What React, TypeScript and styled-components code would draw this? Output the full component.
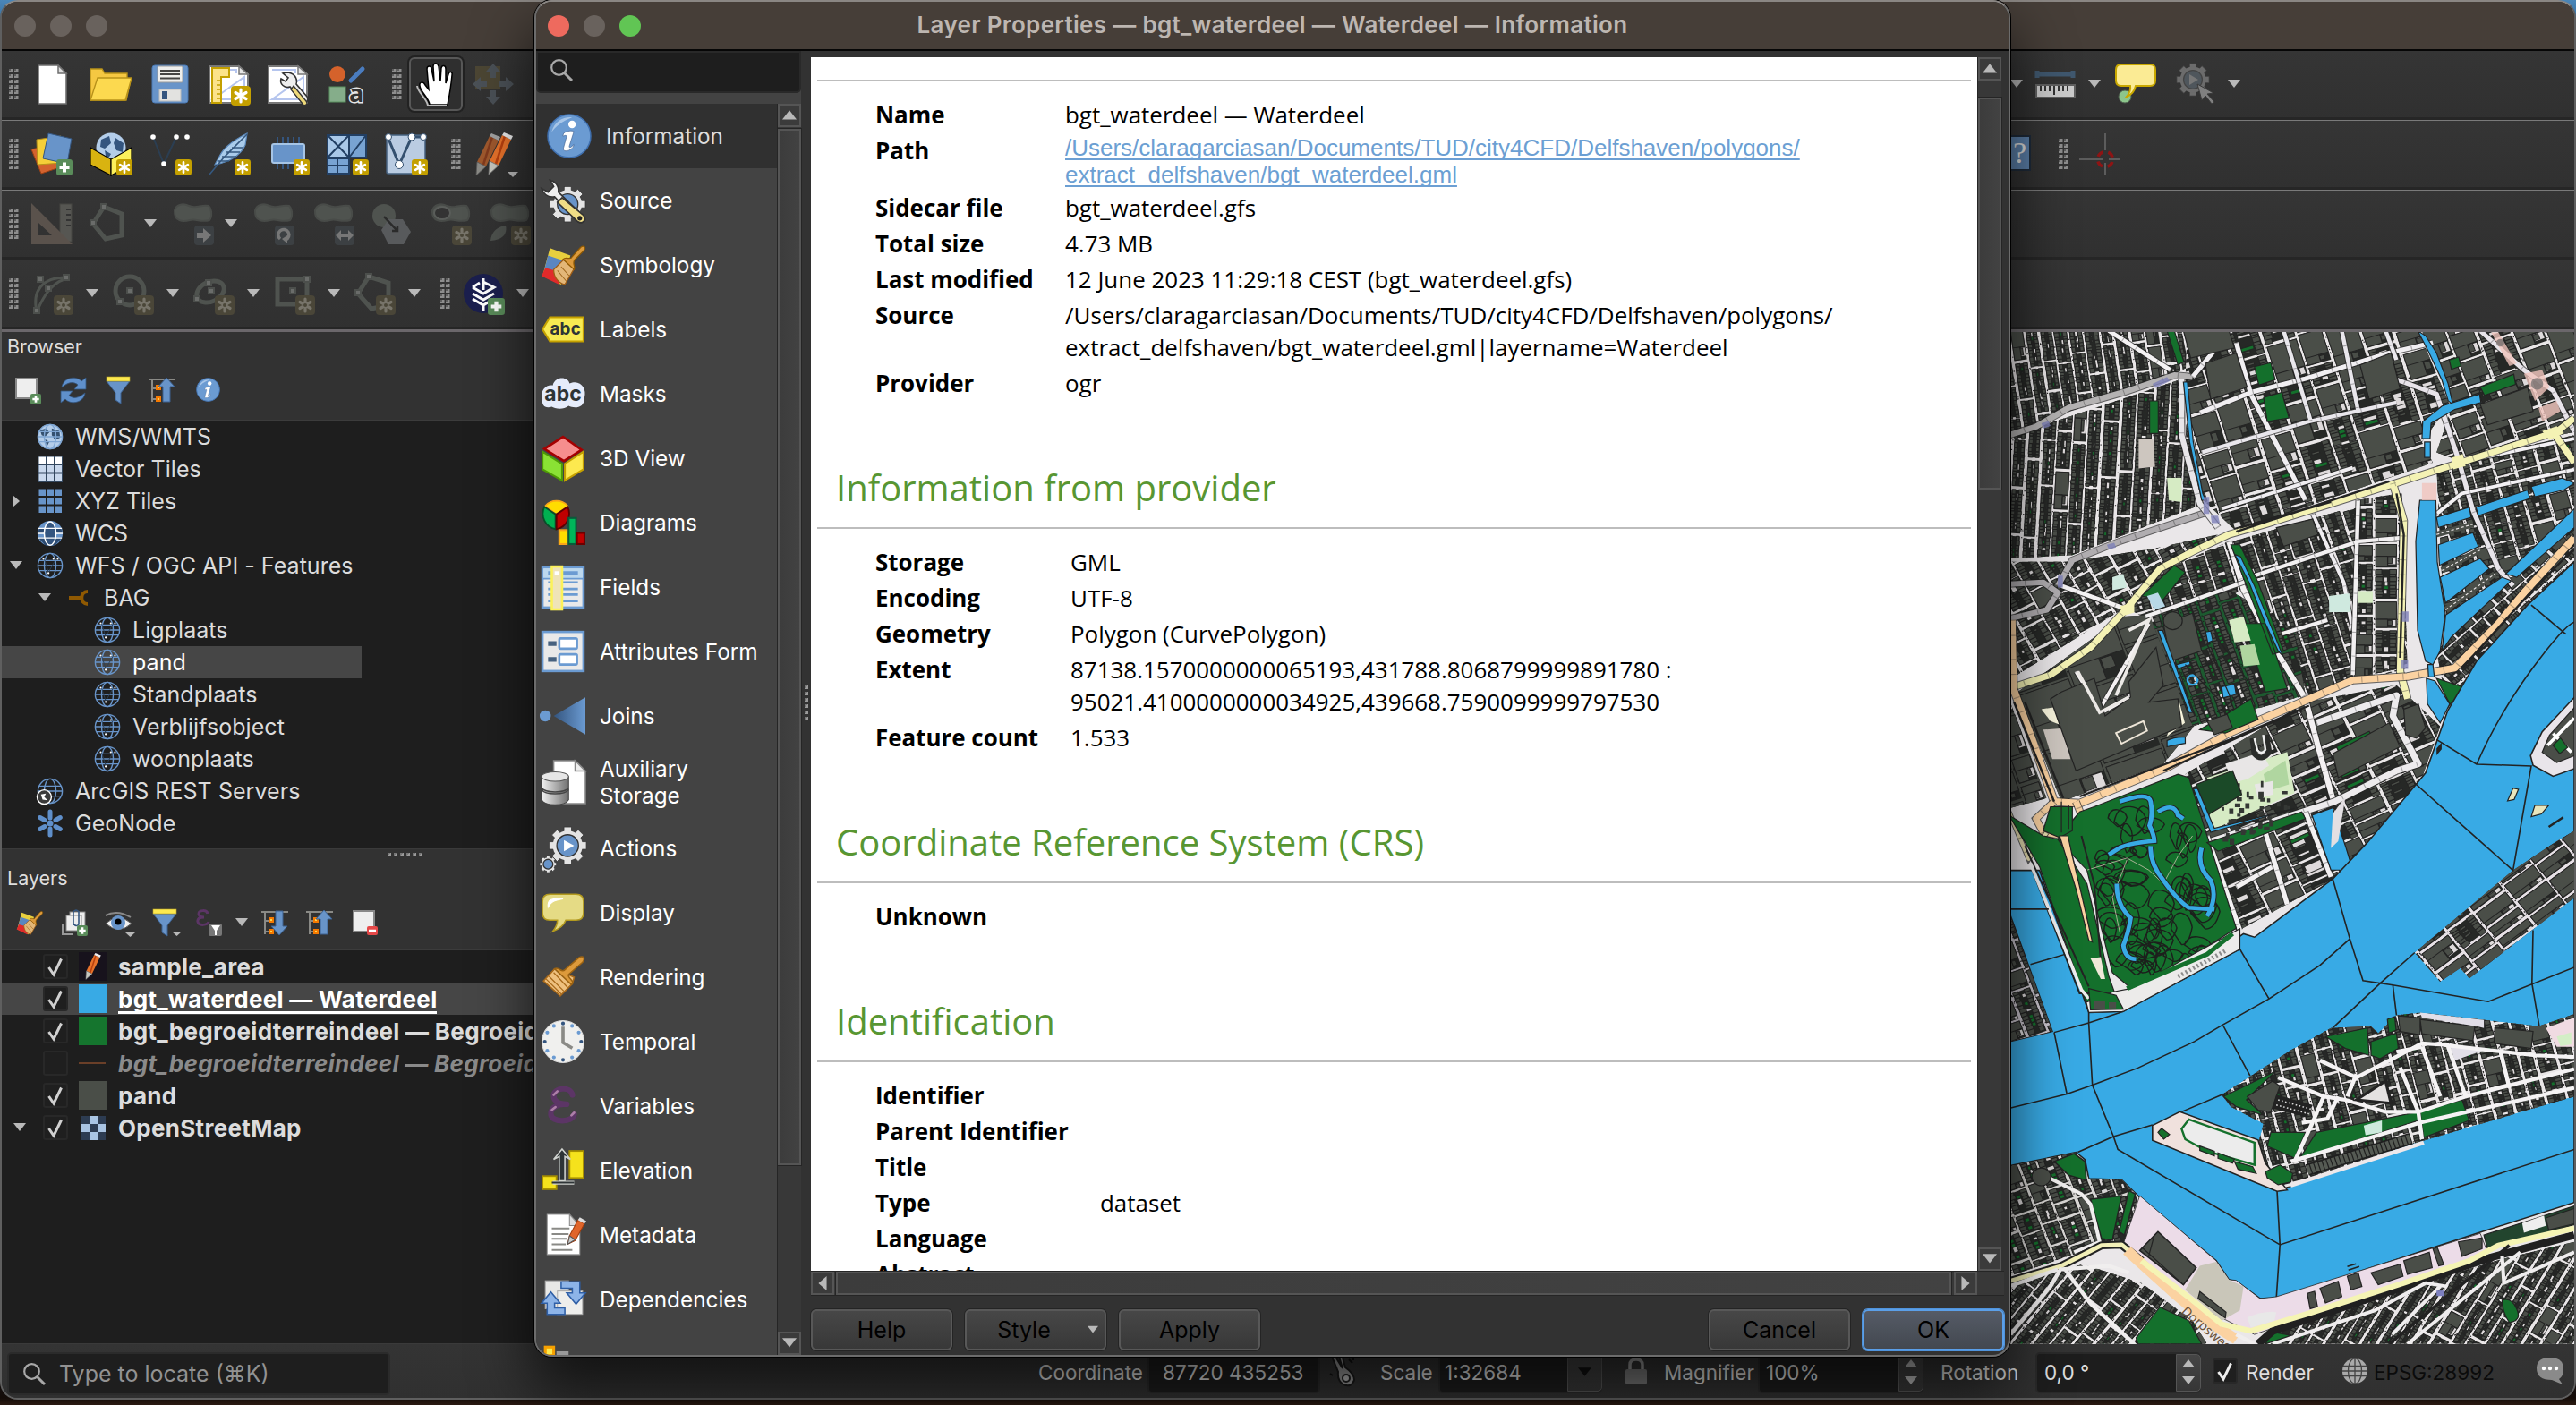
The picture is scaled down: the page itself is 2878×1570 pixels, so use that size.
import React from "react";
import styled, { createGlobalStyle, css } from "styled-components";

const ui = `Inter, "Liberation Sans", sans-serif`;
const doc = `"Open Sans", "Noto Sans", sans-serif`;

const Global = createGlobalStyle`
  * { box-sizing: border-box; }
  html, body { margin: 0; padding: 0; }
  body { width: 2878px; height: 1570px; overflow: hidden; font-family: ${ui}; }
  svg { display: block; flex: none; overflow: visible; }
`;

/* ---------- shell ---------- */
const Desktop = styled.div`
  position: relative;
  width: 2878px;
  height: 1570px;
  overflow: hidden;
  background: linear-gradient(#4a86b8 0, #2d5f8c 40px, #16304b 1400px, #140c08 1562px, #2b1a12 1570px);
`;
const MainWindow = styled.div`
  width: 2878px;
  height: 1564px;
  display: flex;
  flex-direction: column;
  border-radius: 20px;
  overflow: hidden;
  background: #323232;
  border: 2px solid #5f5f5f;
  border-top-color: #8a8683;
`;
const Dialog = styled.div`
  position: absolute;
  left: 597px;
  top: 0;
  width: 1649px;
  height: 1516px;
  display: flex;
  flex-direction: column;
  border: 2px solid #6c6c6c;
  border-top-color: #8a8683;
  border-radius: 20px;
  overflow: hidden;
  background: #323232;
`;
const DialogShadow = styled.div`
  position: absolute;
  left: 597px;
  top: 0;
  width: 1649px;
  height: 1516px;
  border-radius: 20px;
  box-shadow: 0 0 0 1px #000, 0 34px 64px 4px rgba(0, 0, 0, 0.64);
`;
const TitleBar = styled.div`
  height: 55px;
  flex: none;
  display: grid;
  grid-template-columns: 200px 1fr 200px;
  align-items: center;
  background: #463e38;
  border-bottom: 2px solid #060606;
`;
const Lights = styled.div<{ $gap: number; $left: number }>`
  display: flex;
  gap: ${(p) => p.$gap}px;
  padding-left: ${(p) => p.$left}px;
`;
const Light = styled.i<{ $c: string }>`
  width: 24px;
  height: 24px;
  border-radius: 50%;
  background: ${(p) => p.$c};
`;
const Title = styled.div`
  text-align: center;
  font-weight: 600;
  font-size: 26px;
  letter-spacing: 0.32px;
  padding-bottom: 3px;
  color: #bdb6b1;
  white-space: nowrap;
`;

/* ---------- toolbars ---------- */
const ToolRow = styled.div`
  height: 78px;
  flex: none;
  display: flex;
  align-items: stretch;
  background: linear-gradient(#353535, #303030);
  border-bottom: 1px solid #7a7a7a;
  box-shadow: inset 0 -3px 0 #262626;
  margin-left: -2px;
`;
const Slot = styled.div<{ $w: number }>`
  width: ${(p) => p.$w}px;
  flex: none;
  display: flex;
  align-items: center;
  justify-content: center;
  padding-bottom: 3px;
`;
const PressedButton = styled.div`
  width: 60px;
  height: 60px;
  flex: none;
  border: 2px solid #575757;
  border-radius: 6px;
  box-shadow: 0 0 0 2px #222;
  background: #2f2f2f;
  display: flex;
  align-items: center;
  justify-content: center;
`;
const Body = styled.div`
  flex: none;
  height: 1134px;
  display: flex;
  border-top: 3px solid #6b676b;
  margin-top: -1px;
`;
const Dock = styled.div`
  width: 900px;
  flex: none;
  display: flex;
  flex-direction: column;
`;
const Panel = styled.div<{ $h: number }>`
  height: ${(p) => p.$h}px;
  flex: none;
  display: flex;
  flex-direction: column;
`;
const PanelTitle = styled.div<{ $h: number }>`
  height: ${(p) => p.$h}px;
  flex: none;
  padding: 0 6px 3px;
  display: flex;
  align-items: center;
  font-size: 21.5px;
  color: #dedede;
`;
const PanelTools = styled.div<{ $h: number }>`
  height: ${(p) => p.$h}px;
  flex: none;
  display: flex;
  align-items: center;
  padding-left: 5px;
`;
const Tree = styled.div`
  flex: 1;
  background: #1e1e1e;
  border-top: 1px solid #3c3c3c;
  border-bottom: 1px solid #3a3a3a;
  overflow: hidden;
`;
const TreeRow = styled.div<{ $level: number; $on?: boolean }>`
  height: 36px;
  width: ${(p) => (p.$on ? 402 : 900)}px;
  display: flex;
  align-items: center;
  padding-left: ${(p) => p.$level * 32}px;
  background: ${(p) => (p.$on ? "#464646" : "transparent")};
  color: ${(p) => (p.$on ? "#fff" : "#dcdcdc")};
  font-size: 25px;
  letter-spacing: 0.05px;
  white-space: nowrap;
  span { margin-top: -1px; margin-left: -1px; }
`;
const Twisty = styled.div<{ $w: number }>`
  width: ${(p) => p.$w}px;
  flex: none;
  display: flex;
  justify-content: center;
`;
const TreeIcon = styled.div`
  width: 45px;
  flex: none;
`;
const LayerRow = styled.div<{ $on?: boolean; $off?: boolean }>`
  height: 36px;
  display: flex;
  align-items: center;
  background: ${(p) => (p.$on ? "#464646" : "transparent")};
  font-size: 26px;
  font-weight: 700;
  letter-spacing: 0.3px;
  color: ${(p) => (p.$on ? "#fff" : p.$off ? "#8a8a8a" : "#dcdcdc")};
  white-space: nowrap;
  ${(p) => p.$off && css`font-style: italic;`}
  ${(p) => p.$on && css`span { border-bottom: 3px solid #fff; line-height: 27px; padding-top: 3px; }`}
`;
const Check = styled.div<{ $m?: number }>`
  width: 28px;
  height: 28px;
  margin-right: ${(p) => p.$m ?? 12}px;
  flex: none;
  border: 2px solid #282828;
  border-radius: 3px;
  background: #1f1f1f;
`;
const Swatch = styled.div<{ $c: string }>`
  width: 32px;
  height: 32px;
  margin-right: 12px;
  flex: none;
  display: flex;
  align-items: center;
  justify-content: center;
  background: ${(p) => p.$c};
`;
const SplitGrip = styled.div<{ $v?: boolean }>`
  flex: none;
  display: flex;
  flex-direction: ${(p) => (p.$v ? "column" : "row")};
  gap: 3px;
  align-items: center;
  justify-content: center;
  ${(p) => (p.$v ? css`width: 9px; padding-left: 2px;` : css`height: 12px;`)}
`;
const GripDot = styled.i`
  width: 4px;
  height: 4px;
  background: linear-gradient(135deg, #777 50%, #9a9a9a 50%);
`;
const MapPane = styled.div`
  flex: 1;
  min-width: 0;
  display: flex;
  justify-content: flex-end;
  background: #4a4e48;
  overflow: hidden;
`;

/* ---------- status bar ---------- */
const StatusBar = styled.div`
  flex: 1;
  display: flex;
  align-items: center;
  background: linear-gradient(#343434, #303030);
  font-size: 22.5px;
  color: #dedede;
  margin-left: -2px;
  white-space: nowrap;
`;
const Locator = styled.div`
  width: 428px;
  height: 48px;
  margin: 6px 0 0 8px;
  flex: none;
  display: flex;
  align-items: center;
  gap: 15px;
  padding-left: 16px;
  border: 2px solid #2b2b2b;
  border-radius: 5px;
  background: #1e1e1e;
  color: #929292;
  font-size: 25px;
`;
const StatusText = styled.div<{ $w: number; $c?: string }>`
  width: ${(p) => p.$w}px;
  flex: none;
  padding-top: 3px;
  color: ${(p) => p.$c ?? "inherit"};
`;
const Field = styled.div<{ $w: number; $pad: number }>`
  width: ${(p) => p.$w}px;
  height: 46px;
  margin-top: 3px;
  flex: none;
  display: flex;
  align-items: center;
  justify-content: space-between;
  padding-left: ${(p) => p.$pad}px;
  border-radius: 5px;
  border: 2px solid #2a2a2a;
  background: #1d1d1d;
`;
const FieldButton = styled.div<{ $w: number }>`
  width: ${(p) => p.$w}px;
  height: 42px;
  margin-right: -2px;
  border: 1px solid #555;
  border-radius: 0 5px 5px 0;
  background: linear-gradient(#454545, #363636);
  display: flex;
  flex-direction: column;
  gap: 5px;
  align-items: center;
  justify-content: center;
`;
const Space = styled.div<{ $w: number; $grow?: boolean }>`
  width: ${(p) => p.$w}px;
  flex: ${(p) => (p.$grow ? 1 : "none")};
`;

/* ---------- dialog ---------- */
const DialogBody = styled.div`
  flex: 1;
  min-height: 0;
  display: flex;
`;
const Sidebar = styled.div`
  width: 296px;
  flex: none;
  display: flex;
  flex-direction: column;
  background: #434343;
`;
const Search = styled.div`
  height: 47px;
  flex: none;
  padding: 0 0 4px 14px;
  display: flex;
  align-items: center;
  background: #1e1e1e;
  border: 2px solid #292929;
  border-radius: 0 0 5px 5px;
  margin-bottom: 12px;
`;
const SideMain = styled.div`
  flex: 1;
  min-height: 0;
  display: flex;
`;
const SideList = styled.div`
  width: 269px;
  overflow: hidden;
`;
const SideItem = styled.div<{ $on?: boolean; $h?: number }>`
  height: ${(p) => p.$h ?? 72}px;
  display: flex;
  align-items: center;
  gap: 16px;
  padding-left: ${(p) => (p.$on ? 12 : 5)}px;
  background: ${(p) => (p.$on ? "#303030" : "transparent")};
  color: ${(p) => (p.$on ? "#dcdcdc" : "#fff")};
  font-size: 24.3px;
  line-height: 30px;
  span { white-space: pre; margin-top: -1px; }
`;
const VScroll = styled.div`
  width: 27px;
  flex: none;
  display: flex;
  flex-direction: column;
  background: #383838;
  border-left: 1px solid #252525;
`;
const HScroll = styled.div`
  height: 28px;
  flex: none;
  display: flex;
  background: #383838;
  border-top: 1px solid #252525;
  border-bottom: 1px solid #252525;
`;
const ScrollButton = styled.div`
  width: 26px;
  height: 26px;
  flex: none;
  border: 2px solid #555;
  background: #3b3b3b;
  display: flex;
  align-items: center;
  justify-content: center;
`;
const Thumb = styled.div<{ $w?: number; $h?: number; $mt?: number }>`
  width: ${(p) => (p.$w ? p.$w + "px" : "100%")};
  height: ${(p) => (p.$h ? p.$h + "px" : "100%")};
  margin-top: ${(p) => p.$mt ?? 0}px;
  flex: none;
  border: 2px solid #555;
  outline: 1px solid #252525;
  background: linear-gradient(90deg, #3c3c3c, #424242);
`;
const Content = styled.div`
  flex: 1;
  min-width: 0;
  display: flex;
  flex-direction: column;
  padding: 7px 5px 0 2px;
`;
const DocFrame = styled.div`
  height: 1356px;
  flex: none;
  display: flex;
`;
const Paper = styled.div`
  width: 1303px;
  flex: none;
  background: #fff;
  color: #000;
  overflow: hidden;
  padding: 25px 7px 0;
  font-family: ${doc};
  font-size: 25.95px;
`;
const Rule = styled.div`
  height: 2px;
  background: #bdbdbd;
  margin-bottom: 18px;
`;
const Heading = styled.div`
  height: 60px;
  margin: 67px 0 13px 21px;
  line-height: 58px;
  font-size: 40px;
  color: #589632;
`;
const Row = styled.div<{ $col: number; $h?: number }>`
  height: ${(p) => p.$h ?? 40}px;
  display: grid;
  grid-template-columns: ${(p) => p.$col}px 1fr;
  margin-left: 65px;
  line-height: 36px;
  padding-top: 1px;
  white-space: pre;
`;
const PathLink = styled.a`
  display: block;
  font-family: "Liberation Sans", Arial, sans-serif;
  font-size: 26px;
  line-height: 30px;
  color: #6c9fd3;
  text-decoration: underline;
  text-decoration-thickness: 2px;
  text-underline-offset: 3px;
  text-decoration-skip-ink: none;
`;
const Buttons = styled.div`
  display: flex;
  padding-top: 15px;
  gap: 14px;
`;
const Button = styled.button<{ $primary?: boolean; $left?: boolean }>`
  width: 158px;
  height: 46px;
  padding: 0;
  font-family: ${ui};
  font-size: 25px;
  color: #000;
  border-radius: 6px;
  border: 2px solid ${(p) => (p.$primary ? "#5b9fe8" : "#585858")};
  background: ${(p) => (p.$primary ? "linear-gradient(#555b66,#434850)" : "linear-gradient(#474747,#383838)")};
  box-shadow: 0 0 0 1px ${(p) => (p.$primary ? "#4f93dc" : "#242424")};
  margin-left: ${(p) => (p.$left ? "auto" : 0)};
  display: flex;
  align-items: center;
  justify-content: center;
`;

/* ---------- small glyphs ---------- */
const Tri = ({ d = "down", s = 14, c = "#b9b9b9" }: { d?: string; s?: number; c?: string }) => {
  const pts: Record<string, string> = { down: "0,2 14,2 7,11", up: "0,11 14,11 7,2", right: "3,0 3,14 11,7", left: "11,0 11,14 3,7" };
  return <svg width={s} height={s} viewBox="0 0 14 14"><polygon points={pts[d]} fill={c} /></svg>;
};
const Grip = () => (
  <svg width="11" height="34" viewBox="0 0 11 34">
    {[0, 6, 12, 18, 24, 30].map((y) => [0, 6].map((x) => <g key={x + "-" + y}><rect x={x} y={y} width="4.5" height="4" fill="#8d8d8d" /><rect x={x} y={y} width="2" height="2" fill="#5e5e5e" /></g>))}
  </svg>
);
const I = ({ s = 48, w, children }: { s?: number; w?: number; children: React.ReactNode }) => (
  <svg width={w ?? s} height={s} viewBox="0 0 48 48">{children}</svg>
);
const Lens = ({ s = 25, c = "#a8a8a8" }) => (
  <svg width={s} height={s} viewBox="0 0 25 25" fill="none" stroke={c} strokeWidth="2.2"><circle cx="9.5" cy="9.5" r="8.3" /><path d="M15.5 15.5L24 24" strokeWidth="3" /></svg>
);
const Tick = ({ c = "#d0d0d0" }) => (
  <svg width="24" height="24" viewBox="0 0 24 24" fill="none" stroke={c} strokeWidth="3"><path d="M4.5 13L10 21L18.500 3.500" /></svg>
);
const Star = ({ x = 26, y = 26, s = 22, dim = false }) => (
  <g transform={`translate(${x} ${y}) scale(${s / 22})`}>
    <rect width="22" height="22" rx="4" fill={dim ? "#4a4638" : "#c4a000"} />
    <g stroke={dim ? "#77746a" : "#fff"} strokeWidth="3.200" strokeLinecap="round">
      <path d="M11 4V18M5 7.500L17 14.500M17 7.500L5 14.500" />
    </g>
    {dim && <circle cx="11" cy="11" r="2" fill="#4a4638" />}
  </g>
);
const Plus = ({ x = 30, y = 30, s = 18 }) => (
  <g transform={`translate(${x} ${y}) scale(${s / 18})`}><rect width="18" height="18" rx="3" fill="#5a8c5a" /><path d="M9 3.500V14.500M3.500 9H14.500" stroke="#fff" strokeWidth="4" /></g>
);
const Page = () => <g><path d="M9 3H31L40 12V46H9Z" fill="#fff" stroke="#6e6e6e" strokeWidth="1.600" /><path d="M31 3V12H40Z" fill="#ddd" stroke="#6e6e6e" strokeWidth="1.500" /></g>;
const WideSheet = () => <g><path d="M2 4H35L45 13V45H2Z" fill="#fff" stroke="#777" strokeWidth="2" /><path d="M6 8H32V12M41 16V41H6Z" fill="none" stroke="#b5c5ee" strokeWidth="2" /><path d="M35 4V13H45Z" fill="#e6e6e6" stroke="#777" strokeWidth="1.500" /></g>;
const Wrench = () => (
  <g>
    <path d="M18 12L24 17L21 21L16 18C14 24 20 29 26 27L38 42C41 47 48 44 45 38L33 24C35 17 30 11 22 11Z" fill="#eee" stroke="#333" strokeWidth="1.600" />
    <path d="M30 26L44 43C47 47 42 49 40 46L27 30Z" fill="#eed97a" stroke="#333" strokeWidth="1.300" />
  </g>
);
const Gear = ({ cx, cy, r, fill = "#e4e4e4", hub = "#6894c9", stroke = "#333" }: { cx: number; cy: number; r: number; fill?: string; hub?: string; stroke?: string }) => (
  <g transform={`translate(${cx} ${cy})`}>
    {[0, 1, 2, 3, 4, 5, 6, 7].map((i) => <rect key={i} x={-r * 0.2} y={-r} width={r * 0.4} height={r * 0.4} transform={`rotate(${i * 45})`} fill={fill} stroke={stroke} strokeWidth=".7" />)}
    <circle r={r * 0.8} fill={fill} /><circle r={r * 0.58} fill={hub} stroke={stroke} strokeWidth="1.300" />
  </g>
);
const Blob = ({ o = 0 }) => <path transform={`translate(0 ${o})`} d="M4 9C6 2 14 1 20 4C28 8 34 2 42 4C46 8 46 17 43 20C34 23 28 18 21 20C14 22 3 22 4 9Z" fill="#4f534f" stroke="#484b48" strokeWidth="2" />;
const Mini = ({ children }: { children: React.ReactNode }) => <g transform="translate(26 26)"><rect width="22" height="22" rx="4" fill="#3c4043" />{children}</g>;
const GlobeLines = ({ c = "#6894c9", r = 14.500 }) => (
  <g fill="none" stroke={c} strokeWidth="1.500"><circle cx="16" cy="16" r={r} /><ellipse cx="16" cy="16" rx="7" ry={r} /><path d="M3 10H29M1.500 16H30.500M3 22H29" /></g>
);
const Globe = () => <svg width="32" height="30" viewBox="0 0 32 32"><GlobeLines /><path d="M9 8L14 24L23 8" stroke="#2b4058" fill="none" /><g fill="#fff"><circle cx="8" cy="8" r="1.100" /><circle cx="20" cy="8" r="1.100" /><circle cx="25" cy="8" r="1.100" /><circle cx="14" cy="25" r="1.200" /></g></svg>;
const Tiles = ({ a, b }: { a: string; b: string }) => (
  <svg width="32" height="30" viewBox="0 0 32 30"><rect x="2" width="28" height="30" fill={b} />{[0, 1, 2].map((r) => [0, 1, 2].map((c) => <rect key={r * 3 + c} x={3.500 + c * 9} y={1.500 + r * 9.500} width="7.500" height="7.500" fill={r === 0 && a === "#fff" ? "#fff" : a === "#fff" ? "#c9d8ec" : a} />))}</svg>
);
const Funnel = ({ menu = false }) => <svg width="28" height="32" viewBox="0 0 28 32"><path d="M1 6H27L17 19V31L11 27V19Z" fill="#6894c9" stroke="#3c618f" /><rect x="1" y="1" width="26" height="5" fill="#fce94f" stroke="#b9a227" strokeWidth=".6" />{menu && <path d="M22 26H33L27.500 31Z" fill="#b9b9b9" />}</svg>;
const TreeArrow = ({ up = false }) => (
  <svg width="32" height="30" viewBox="0 0 32 30"><path d="M0 3H30M4 3V28M4 13H10M4 25H10" stroke="#8a8a86" strokeWidth="2" fill="none" /><rect x="8" y="9" width="6" height="6" fill="#f57900" /><rect x="8" y="22" width="6" height="6" fill="#f57900" /><rect x="10" y="11" width="2" height="2" fill="#fcd94f" /><rect x="10" y="24" width="2" height="2" fill="#fcd94f" />
    <path transform={up ? "" : "translate(0 30) scale(1 -1)"} d="M20 1L29 11H24V28H16V11H11Z" fill="#6894c9" stroke="#3c618f" /></svg>
);
const Paint = ({ s = 32 }) => (
  <svg width={s} height={s} viewBox="0 0 48 48"><path d="M10 6L32 14L22 45L2 36Z" fill="#e8cf3d" /><path d="M8 14L26 20L20 36L4 29Z" fill="#5a86c0" /><path d="M5 27L22 32L20 45L1 36Z" fill="#e02a2a" /><path d="M14 29L25 18L36 28L26 45C20 44 14 38 14 29Z" fill="#e3b778" stroke="#a05d14" strokeWidth="1.200" /><path d="M18 30L28 42M22 26L31 36" stroke="#a0691f" strokeWidth="1" /><path d="M24 18C28 14 32 20 34 15L43 5C47 2 49 6 46 9L37 18C33 22 38 26 36 29Z" fill="#dc9a3c" stroke="#8f5902" strokeWidth="1.200" /></svg>
);
const PencilShape = ({ t = "", dim = false }) => (
  <g transform={t} opacity={dim ? 0.6 : 1}><path d="M22 3L32 8L18 37L8 32Z" fill="#e9732b" /><path d="M25 4L15 35" stroke="#b8400f" strokeWidth="2.500" /><path d="M8 32L18 37L7 47Z" fill="#c8c8c0" stroke="#777" strokeWidth=".8" /><path d="M22 3L24 0L34 4L32 8Z" fill="#eee" /></g>
);

/* ---------- map ---------- */
const rng = (seed: number) => () => {
  seed = (seed + 0x6d2b79f5) | 0;
  let t = Math.imul(seed ^ (seed >>> 15), 1 | seed);
  t = (t + Math.imul(t ^ (t >>> 7), 61 | t)) ^ t;
  return ((t ^ (t >>> 14)) >>> 0) / 4294967296;
};
const box = (x: number, y: number, w: number, h: number) => `M${x.toFixed(1)} ${y.toFixed(1)}h${w.toFixed(1)}v${h.toFixed(1)}h${(-w).toFixed(1)}z`;

type Area = { pts: string; a: number; bw: number; bh: number; big?: number; green?: number; base?: string };
const BUILD = "#4a4e48", LINE = "#232323", GREEN = "#14702c", WATER = "#38aae5";

const District = ({ id, area }: { id: string; area: Area }) => {
  const { pts, a, bw, bh, big = 0.12, green = 0.08, base = "#e9e6e7" } = area;
  const p = pts.split(" ").map((s) => s.split(",").map(Number));
  const xs = p.map((q) => q[0]), ys = p.map((q) => q[1]);
  const cx = (Math.min(...xs) + Math.max(...xs)) / 2, cy = (Math.min(...ys) + Math.max(...ys)) / 2;
  const R = Math.hypot(Math.max(...xs) - cx, Math.max(...ys) - cy) + 20;
  const r = rng(id.split("").reduce((n, c) => n * 31 + c.charCodeAt(0), 7));
  let block = "", b = "", w = "", g = "", dots = "";
  for (let u = -R; u < R; ) {
    const shift = r() * bh;
    const cw = bw * (0.82 + r() * 0.36);
    const gap = 5 + r() * 5;
    for (let v = -R - shift; v < R; ) {
      const h = bh * (0.6 + r() * 0.8);
      if (r() < big) {
        const k = 0.4 + r() * 0.4;
        block += box(u, v, cw, h);
        b += box(u + 1, v + 1, cw - 2, h * k) + box(u + 1, v + h * k + 1, cw * 0.55, h * (1 - k) - 3);
        b += box(u + cw * 0.58, v + h * k + 5, cw * 0.2, h * (1 - k) * 0.5);
        if (r() < 0.6) w += box(u + cw * 0.6, v + h * k + 4, cw * 0.34, h * (1 - k) * 0.6);
      } else {
        block += box(u, v, cw, h);
        const d = Math.min(cw * 0.34, 22);
        for (let t = v; t < v + h - 6; ) {
          const s = 6 + r() * 8;
          b += box(u + r() * 2, t, d * (0.75 + r() * 0.3), s) + box(u + cw - d, t, d * (0.75 + r() * 0.25), s);
          t += s + 0.5;
        }
        for (let t = v + 12; t < v + h - 16; t += 12) {
          const q = r();
          const x = u + d + 3, ww = Math.max(3, cw - 2 * d - 6);
          if (q < 0.32) w += box(x + r() * 4, t, ww * (0.5 + r() * 0.5), 5 + r() * 10);
          else if (q < 0.32 + green) g += box(x, t, ww, 10);
          else if (q < 0.72) b += box(x + r() * 3, t, ww * 0.6, 6);
        }
      }
      for (let k = 0; k < 7; k++) if (r() < 0.6) dots += box(u + cw + 1 + r() * 4, v + r() * h, 3, 3);
      v += h + 5 + r() * 5;
    }
    u += cw + gap;
  }
  return (
    <g clipPath={`url(#${id})`}>
      <clipPath id={id}><polygon points={pts} /></clipPath>
      <polygon points={pts} fill={base} />
      <g transform={`translate(${cx} ${cy}) rotate(${a})`}>
        <path d={block} fill="#262826" />
        <path d={w} fill="#dedadb" />
        <path d={b} fill={BUILD} stroke={LINE} strokeWidth="2.400" />
        <path d={g} fill={GREEN} stroke={LINE} strokeWidth="2" />
        <path d={dots} fill="#1d1d1d" />
      </g>
    </g>
  );
};

const north: Area[] = [
  { pts: "16,25 490,25 510,130 470,150 16,325", a: -8, bw: 34, bh: 110, green: 0.1 },
  { pts: "505,25 1140,25 1225,240 1150,350 1180,410 640,610 550,520 500,180", a: -17, bw: 74, bh: 86, big: 0.5 },
  { pts: "1150,25 1568,25 1568,320 1240,400 1190,380 1235,240", a: -20, bw: 78, bh: 74, big: 0.5 },
  { pts: "16,335 480,170 550,530 190,680 16,690", a: 3, bw: 36, bh: 170, green: 0.14 },
  { pts: "16,700 180,700 420,660 590,620 340,830 16,1045", a: -28, bw: 56, bh: 62 },
  { pts: "340,835 440,725 620,640 672,765 640,790 480,850 400,870", a: -17, bw: 50, bh: 56, big: 0.2, green: 0.4 },
  { pts: "630,640 1095,500 1110,1010 840,1090 780,960", a: -17, bw: 44, bh: 92 },
  { pts: "970,520 1090,500 1095,1010 960,1040", a: 0, bw: 52, bh: 70, big: 0.4 },
  { pts: "40,1080 330,860 480,850 540,1160 440,1290 160,1400", a: -20, bw: 170, bh: 130, big: 1, base: BUILD },
  { pts: "400,850 620,780 800,900 830,1090 520,1180", a: -19, bw: 50, bh: 90, green: 0.4, base: "#1d5a30" },
  { pts: "500,1320 830,1110 1080,1060 1200,1180 1150,1330 1000,1520 900,1630 640,1780 560,1500", a: -25, bw: 92, bh: 66, big: 0.45 },
  { pts: "16,1100 120,1390 16,1420", a: -18, bw: 60, bh: 90, big: 0.6, green: 0.4, base: BUILD },
  { pts: "1190,420 1568,330 1568,620 1380,760 1210,860", a: -15, bw: 54, bh: 62, big: 0.3 },
  { pts: "1190,960 1568,570 1568,700 1300,990 1220,1130", a: 47, bw: 40, bh: 50, big: 0.35 },
];
const south: Area[] = [
  { pts: "16,210 135,555 16,585", a: -20, bw: 46, bh: 60, big: 0.4, green: 0.5, base: "#c9c4cc" },
  { pts: "1130,325 1400,85 1520,0 1568,-30 1568,165 1280,400 1255,370 1200,410", a: -38, bw: 92, bh: 46, big: 0.92, base: "#e7e1e6" },
  { pts: "600,740 790,610 900,545 1010,540 1030,560 1080,508 1145,500 1470,540 1568,505 1568,745 1120,885 760,1020 680,960 715,825 625,775", a: -14, bw: 42, bh: 62, big: 0.12, green: 0.1 },
  { pts: "16,950 200,908 235,985 325,988 370,1035 340,1170 270,1180 16,1270", a: -20, bw: 50, bh: 60, big: 0.2, green: 0.4, base: "#d8d6d4" },
  { pts: "16,1290 220,1235 380,1290 520,1400 560,1468 16,1468", a: 38, bw: 36, bh: 110, big: 0.1, green: 0.12 },
  { pts: "700,1468 800,1400 1370,1220 1568,1170 1568,1468", a: 30, bw: 36, bh: 110, big: 0.1, green: 0.14 },
];
type Road = [string, number, string];
const roadsNorth: Road[] = [
  ["M16 330L90 305L180 250L330 205L470 155L520 160", 17, "#b4b2b2"],
  ["M16 765L110 760L150 790L120 840L16 866M150 770L190 695L320 640L560 555", 16, "#b0adb0"],
  ["M460 140L290 25M160 770L330 835", 12, "#f4f2f3"],
  ["M490 165L490 330L540 530L590 600", 15, "#e8e6e9"],
  ["M520 160L625 25M640 60L680 210L830 520M540 265L680 205L830 165L1060 90L1180 60", 13, "#f1eff2"],
  ["M770 25L845 290M545 380L840 290L1080 235M930 25L975 260M1050 25L1080 110", 11, "#e9e7ec"],
  ["M600 545L960 425M850 560L935 760L960 900", 10, "#f0eef1"],
  ["M620 640L660 780L750 960L830 1100L870 1260L910 1410", 15, "#f4f1f2"],
  ["M390 860L500 820L660 760L690 740L975 640L1090 630M765 910L890 870M975 520L960 1030", 11, "#f2f0f1"],
  ["M1310 25L1430 140L1510 200L1568 320M1060 160L1190 210L1250 400L1290 550L1360 720L1400 770", 13, "#e8e4ea"],
  ["M1250 410L1568 340M1190 560L1260 500L1568 430", 10, "#f3f1f4"],
  ["M860 1170L1080 1090L1070 1150L1140 1290L1080 1310L910 1400L560 1520", 18, "#edebed"],
  ["M560 1500L625 1700L650 1775M740 1590L640 1650M720 1490L780 1700M830 1430L900 1620", 13, "#f3f1f2"],
  ["M200 1020L270 1140L340 1100M260 1140L400 880", 10, "#f4f1f2"],
  ["M16 1070L130 1030L240 950L340 835L430 720L520 670L620 620L720 590L930 520L1250 412L1520 320L1568 280M1070 470L1100 580L1090 1020L1110 1100M1510 320L1568 410", 18, "#f4f2b4"],
  ["M24 870L28 1070L80 1220L140 1400L210 1405L450 1300L620 1200L830 1105L960 1045L1110 1035L1240 1010L1360 880L1430 790L1568 630", 20, "#fbd2a1"],
  ["M140 1400L90 1450L110 1490L165 1500L215 1440L200 1400M165 1495L200 1640L235 1800", 17, "#f7cf9f"],
  ["M120 1490L70 1568L16 1430", 10, "#e5dcae"],
];

const NorthDetail = () => {
  const r = rng(17);
  let trees = "";
  for (let i = 0; i < 46; i++) {
    const x = 590 + r() * 200, y = 1520 - (x - 590) * 0.32 - r() * 170;
    trees += box(x, y, 6 + r() * 10, 8 + r() * 12);
  }
  return (
    <g>
      <g fill={GREEN} stroke={LINE} strokeWidth="3">
        <path d="M402 230h24v95h-24zM690 130l45 -12 12 50 -45 16zM1310 190l92 -38 5 30 -85 32zM450 25l20 0 26 90 -16 10zM715 220l50 -15 20 75 -60 10zM1225 110l26 -8 6 26 -26 10zM1190 1040l85 30 -48 46z" />
        <path d="M625 650L650 650L700 760L770 960L740 970L690 830zM380 800l90 -90 30 20 -60 80zM660 880l60 0 60 190 -60 10zM540 1190l80 -50 60 -40 20 60 -90 40z" />
        <path d="M250 1415L480 1320L510 1330L560 1500L640 1770L460 1890L345 1940L300 1900L230 1600L150 1510L210 1430z" />
        <path d="M16 1440L110 1500L150 1510L230 1640L290 1910L320 2000L235 2010L100 1590zM130 1415h60v70l-35 20 -45 -20z" />
        <path d="M560 1520L820 1430L830 1450L590 1545zM915 1240l90 -45 12 20 -92 46z" />
      </g>
      <g fill="#d6ebc4"><path d="M620 870l40 -10 20 70 -45 5zM450 455l40 0 0 70 -35 -5zM560 1330l220 -75 20 120 -230 110zM975 785h40v35h-40z" /></g>
      <path d="M650 945l40 -5 15 60 -45 5zM715 1320l60 -40 10 70 -60 20z" fill="#b0d6a0" />
      <path d="M610 1290l100 -35 20 40 -60 40 -40 10zM690 1350l50 -10 0 40 -40 10z" fill="#e8e6e6" />
      <path d={trees} fill="#343734" />
      <path d="M530 1350L630 1310L655 1380L560 1440z" fill="#1b4a28" stroke={LINE} strokeWidth="3" />
      <path d="M685 1215L690 1260Q710 1285 730 1255L722 1205" fill="none" stroke="#2a2c2a" strokeWidth="16" />
      <path d="M690 1215L698 1250Q710 1265 720 1248L714 1205" fill="none" stroke="#efefef" strokeWidth="6" />
      <path d="M372 342l40 0 5 80 -45 5zM110 1190l55 -4 20 90 -50 0z" fill="#cdc6bf" />
      <path d="M105 1130l65 -10 20 70 -60 -25z M484 1110l15 60 -50 40z" fill="#f7f4dc" />
      <path d="M300 745l30 -10 10 40 -40 8z M895 800l55 -8 5 55 -60 0z" fill="#cfe9df" />
      <path d="M395 800l30 -10 20 40 -30 10z" fill="#b8d8e6" />
      <g fill={BUILD} stroke={LINE} strokeWidth="3">
        <path d="M495 25L620 25L635 75L515 105zM555 120L640 90L670 190L570 225zM980 125L1065 90L1090 195L1005 225zM1310 240L1440 190L1455 260L1330 300zM750 600L850 575L865 620L770 655zM440 880L520 850L545 960L460 990z" />
        <circle cx="466" cy="872" r="26" />
        <path d="M160 1080L250 1040L280 1150L350 1095L345 1050L420 950L440 1060L400 1110L480 1100L490 1180L200 1310L130 1100z" />
        <path d="M905 1260L1060 1170L1090 1240L920 1330zM1100 1130l40 -15 20 70 -25 30 -30 -10zM560 1165l55 -20 15 40 -50 20z" />
      </g>
      <path d="M310 1200l75 -35 10 28 -70 38z" fill="none" stroke="#eee6d8" strokeWidth="5" />
      <path d="M205 1020L265 1140L345 1095M345 900L400 870L310 1090" fill="none" stroke="#ece9e6" strokeWidth="9" />
      <g fill={WATER} stroke={LINE} strokeWidth="3">
        <path d="M495 175L506 175L522 350L548 500L556 520L545 520L512 350zM1138 25L1160 40L1190 90L1222 180L1235 240L1222 230L1205 170L1165 80z" />
        <path d="M1205 245L1308 210L1312 235L1240 255L1175 295L1172 340L1150 340L1152 290zM1157 350h16v45h-16z" />
        <path d="M636 678L652 685L690 770L740 900L768 975L755 960L720 880L675 760z" />
        <path d="M425 900L438 900L520 1140L510 1140zM476 1000L512 990L514 1000L480 1012zM556 905l14 -3 6 28 -14 6zM600 1065l35 -8 5 30 -36 10z" />
        <circle cx="520" cy="1045" r="14" fill="none" stroke={WATER} strokeWidth="6" />
        <path d="M450 1222Q470 1210 500 1212L500 1230Q470 1235 450 1240z" />
        <path d="M1144 520L1188 520L1192 700L1214 850L1200 960L1180 1000L1160 990L1138 900L1133 640z" />
        <path d="M1190 570L1280 540L1285 570L1195 600zM1298 540L1440 490L1446 515L1305 565zM1450 480L1535 455L1568 470L1540 490L1460 510z" />
        <path d="M1195 650L1290 615L1305 655L1198 710zM1200 745L1310 690L1335 720L1215 820zM1215 855L1370 745L1395 755L1230 920L1205 960z" />
        <path d="M1380 735L1568 545L1568 600L1410 745zM1166 1000l14 0 4 36 -16 0zM1162 1040L1186 1048L1226 1115L1200 1170L1165 1115z" />
        <path d="M848 1440L905 1418L940 1530L960 1600L900 1600z" />
        <path d="M522 1362L534 1362L580 1478L800 1420L570 1490z" />
      </g>
      <path d="M1190 620L1290 590M1205 725L1310 665M1215 840L1350 735" stroke={BUILD} strokeWidth="17" />
      <path d="M1190 620L1290 590M1205 725L1310 665M1215 840L1350 735" stroke="#e8e4e4" strokeWidth="3" strokeDasharray="8 6" />
      <g fill="none" stroke={LINE} strokeWidth="3">
        <path d="M160 1400V1490M180 1410V1480M500 1000L590 1100M480 1040L640 960M560 940L630 1110M590 1140L680 1060M600 940L680 1060" />
        <path d="M640 612L1060 465M650 600L900 525M30 1110L140 1400M60 1110L165 1390M210 1385L620 1220L840 1120M440 1310L820 1130M1080 500L1100 620L1090 980M1260 1010L1430 810L1568 660" strokeWidth="6" />
      </g>
    </g>
  );
};

const stream = "M320 1400Q400 1370 405 1400Q412 1440 402 1470Q415 1500 415 1515Q350 1520 320 1535L290 1555M425 1430Q470 1400 480 1440L495 1450M312 1640Q310 1700 350 1740Q345 1780 330 1820Q335 1860 365 1860M405 1530Q402 1580 440 1630Q480 1690 510 1710L580 1715M545 1535Q530 1590 570 1630Q590 1680 560 1735";
const ParkDetail = () => {
  const r = rng(91);
  let d = "";
  for (let i = 0; i < 64; i++) {
    const y = 1440 + r() * 450, x = 250 + (y - 1440) * 0.13 + r() * 270;
    const a = 14 + r() * 34, b = 18 + r() * 36;
    d += `M${(x - a).toFixed(0)} ${y.toFixed(0)}q${(a * 0.2).toFixed(0)} ${(-b).toFixed(0)} ${a.toFixed(0)} ${(-b * 0.9).toFixed(0)}t${a.toFixed(0)} ${(b * 0.8).toFixed(0)}q${(-a * 0.3).toFixed(0)} ${b.toFixed(0)} ${(-a).toFixed(0)} ${b.toFixed(0)}z`;
  }
  const clip = "250,1415 480,1320 560,1500 640,1770 460,1890 345,1940 300,1900 230,1600";
  return (
    <g>
      <clipPath id="park"><polygon points={clip} /></clipPath>
      <g clipPath="url(#park)" fill="none">
        <path d={d} stroke="#1c1f1c" strokeWidth="3.500" />
        <path d="M230 1600L340 1565L400 1600L440 1640L480 1560L520 1500M340 1570L300 1680L320 1780" stroke="#cdc4ae" strokeWidth="2" />
      </g>
      <path d={stream} fill="none" stroke={LINE} strokeWidth="17" />
      <path d={stream} fill="none" stroke={WATER} strokeWidth="12" />
      <path d="M155 1500L200 1655L235 1805L245 1810L215 1670L190 1560L178 1500z" fill="#fbd2a1" stroke={LINE} strokeWidth="3" />
      <path d="M270 1890L250 1640L215 1500M80 1600L210 1960L250 1960L350 1965M60 1530L235 1940" fill="none" stroke={LINE} strokeWidth="5" />
      <path d="M75 1580L215 1950L235 1975" fill="none" stroke="#efedee" strokeWidth="9" />
      <path d="M240 1858l28 -4 12 64 -12 0z" fill="#efe8d8" />
    </g>
  );
};

const MapView = () => (
  <svg width="632" height="1131" viewBox="2246 371 632 1131">
    <g transform="translate(2240 360) scale(.40689 .38265)">
      <rect x="0" y="0" width="1600" height="3010" fill="#eae7e9" />
      {north.map((a, i) => <District key={i} id={"n" + i} area={a} />)}
      {roadsNorth.map(([d, w, c], i) => <g key={i} fill="none"><path d={d} stroke={LINE} strokeWidth={w + 5} opacity=".7" /><path d={d} stroke={c} strokeWidth={w} strokeLinejoin="round" /><path d={d} stroke="#2a2a2a" strokeWidth={w * 0.9} strokeDasharray="2.500 41 3 67" opacity=".35" /></g>)}
      <NorthDetail />
      <path d="M410 180l40 -20 8 12 -40 20zM550 510h16v50h-16zM570 565l20 0 5 22 -22 0zM105 295l20 -6 5 14 -20 8zM150 740h14v35h-14zM285 650l20 -6 5 14 -20 6zM1095 845h18v30h-18zM1092 985h20v28h-20z" fill="#7d80b8" opacity=".8" />
      <path d="M1340 30l20 0 50 90 -20 8zM1430 150l50 -10 20 50 -40 40zM1470 250l50 -20 10 30 -50 30zM1150 470l40 0 0 50 -40 0z" fill="#f0c4bd" opacity=".8" />
      <g fill="#6d6b6b" opacity=".7"><circle cx="1466" cy="180" r="17" /><circle cx="1365" cy="60" r="11" /></g>
      <path d="M1232 395l30 -10 8 35 -34 10zM1480 318l40 -14 20 20 -40 20zM320 830l40 -12 0 30 -30 10z" fill="#f4f2b4" />

      <g transform="translate(0 1516)">
        <path d="M16 85L100 85L235 500L330 497L650 315L640 285L660 270L690 280L905 110L1000 4L1110 -136L1160 -200L1220 -380L1300 -526L1440 -690L1568 -816V1055L1300 1145L750 1335L705 1335L640 1285L620 1280L585 1225L370 1035L325 988L235 985L225 930L200 908L16 948V585L135 555L16 205Z" fill={WATER} stroke={LINE} strokeWidth="4" />
        <path d="M905 -80L940 -130L920 0L900 20z" fill="#e3dfe2" />
      </g>
      <ParkDetail />
      <g transform="translate(0 1516)">
        <path d="M350 430L650 255L650 315L330 497L235 500L228 470L300 440z" fill="#ecebea" stroke={LINE} strokeWidth="3" />
        <path d="M340 430L560 330L630 270" fill="none" stroke={GREEN} strokeWidth="13" />
        <path d="M480 395L610 320" fill="none" stroke="#8b8b8b" strokeWidth="12" strokeDasharray="5 7" />
        <path d="M235 430L310 450L330 490L240 492z" fill={GREEN} stroke={LINE} strokeWidth="3" />
        <path d="M250 465h30v25h-30zM290 470h20v18h-20z" fill={BUILD} />
        {south.map((a, i) => <g key={i}><District id={"s" + i} area={a} /></g>)}
        <g fill="none" stroke={LINE} strokeWidth="4">
          <path d="M16 780L175 738L245 712L370 662L525 585L600 538L730 460L870 362L952 285M905 110L952 285L988 407L1070 420L1332 468L1568 368M1035 415L905 545M1035 415L1130 325M1070 420L1080 508M1455 260L1452 415L1472 540M650 315L730 460M605 540L678 685M235 500V530L245 712L303 862L315 900L760 1178L1568 900M760 1178L750 1335M752 1020L760 1178M140 558L235 530L330 497M140 558L175 738M16 198L125 198M75 360L170 330M205 908L303 862L410 828M490 790L605 738" />
          <path d="M1310 0L1400 85L1450 -220L1300 -225L1190 -297M1300 -225Q1360 -370 1450 -500T1568 -640M1130 -170L1310 0M1450 -690L1545 -605" />
          <path d="M945 1242l24 -8M948 1252l30 -10" />
        </g>
        <path d="M1568 -420L1480 -320L1448 -250L1455 -222L1510 -190L1568 -212z" fill="#e9e5ea" stroke={LINE} strokeWidth="4" />
        <path d="M1568 -390L1500 -310L1480 -260L1520 -230L1568 -250z" fill={BUILD} stroke={LINE} strokeWidth="3" />
        <path d="M1568 -360L1495 -280M1510 -315L1560 -260" stroke="#fff" strokeWidth="9" />
        <path d="M1510 -280l20 -22 20 28 -22 18z" fill={GREEN} stroke={LINE} strokeWidth="3" />
        <path d="M1400 -155l15 3 -12 30 -18 4zM1460 -105l38 0 -20 25 -28 8z" fill="#e9e6bd" stroke={LINE} strokeWidth="3" />
        <path d="M1498 -42l40 -28M1193 -270l8 -10 0 10 -8 10z" stroke={LINE} strokeWidth="6" fill={BUILD} />
        <path d="M410 830L485 790L700 872L720 940L780 1018L752 1022L410 873z" fill="#f0e1dd" stroke={LINE} strokeWidth="4" />
        <path d="M490 840L510 812L690 880L690 945L560 905L500 870z" fill="#ececec" stroke={GREEN} strokeWidth="6" />
        <path d="M425 850l10 -12 22 18 -16 14zM540 890l40 15 0 14 -40 -16zM590 910l45 18 -5 12 -40 -14zM635 935l50 15 10 20 -50 -12zM720 965l40 -20 35 25 -5 25 -35 8 -30 -20z" fill={GREEN} stroke={LINE} strokeWidth="3" />
        <path d="M605 745L750 670L700 720L668 755L715 800L640 775z" fill={GREEN} stroke={LINE} strokeWidth="3" />
        <path d="M670 745L740 700L760 715L735 790L700 785z" fill={BUILD} stroke={LINE} strokeWidth="3" />
        <path d="M885 570L1000 545L1005 625L940 605zM1010 585l70 -25 5 45 -50 30 -25 -10zM1055 520l20 -8 4 40 -20 8zM1145 790L1260 755L1280 815L1155 865zM860 850L1140 790L1140 815L815 925zM735 850L830 850L800 925L725 890z" fill={GREEN} stroke={LINE} strokeWidth="3" />
        <path d="M1085 510l60 5 0 50 -55 -10zM1145 520L1295 540L1290 582L1150 562zM1350 545L1455 555L1450 605L1348 590z" fill={BUILD} stroke={LINE} strokeWidth="3" />
        <path d="M1145 500L1320 522V545L1300 540L1150 515zM1225 590L1320 610L1240 640z" fill="#e2dfe8" />
        <path d="M1490 545L1568 515V600L1520 600z" fill="#f0dbe2" /><path d="M1520 570l40 -12 0 35 -30 5z" fill="#d3eec6" />
        <path d="M755 690L880 745L940 755L1050 790L1140 790L1270 745L1568 665M790 935L1150 820L1568 720M870 640L970 690L1150 590L1220 595L1270 745M880 745L850 820L800 935M920 745L890 810L820 822M945 745L970 680M1150 600L1200 745M1090 660L1140 790L1150 870M1365 610L1390 720M1210 595L1460 625L1568 630M1080 615L1150 600" fill="none" stroke="#f5f3f4" strokeWidth="11" />
        <path d="M970 755L1050 700L1065 765z" fill="#e4e2e2" stroke={LINE} strokeWidth="8" />
        <path d="M1155 880L790 1005" fill="none" stroke="#eee8ea" strokeWidth="12" />
        <path d="M835 960L1120 868" fill="none" stroke="#1f1f1f" strokeWidth="34" /><path d="M835 960L1120 868" fill="none" stroke="#555a53" strokeWidth="26" strokeDasharray="9 3" />
        <path d="M750 740L850 770L835 805L740 780z" fill="#222" /><path d="M755 755L845 782M750 770L840 796" stroke="#ddd" strokeWidth="4" strokeDasharray="4 6" />
        <path d="M990 830l50 -15 0 35 -45 8z" fill="#cdeadd" />
        <path d="M140 935L195 912L225 935L228 990L180 975zM240 1045L325 1035L300 1165L270 1160zM345 1020l18 10 -30 120 -15 -10z" fill={GREEN} stroke={LINE} strokeWidth="4" />
        <path d="M130 985L215 1030L240 1060L265 1170L195 1200" fill="none" stroke="#f0eeee" strokeWidth="10" />
        <circle cx="105" cy="980" r="26" fill={BUILD} stroke={LINE} strokeWidth="3" />
        <path d="M375 1035L585 1225L620 1280L640 1282L705 1335L750 1330L1310 1145L1330 1200L1050 1310L690 1440L560 1370L330 1175z" fill="#ecdce8" stroke={LINE} strokeWidth="2" />
        <path d="M540 1240L585 1228L620 1280L660 1300L650 1370L600 1400L500 1310z" fill="#c9c6b9" />
        <path d="M425 1140L530 1245L495 1295L375 1195z" fill={BUILD} stroke={LINE} strokeWidth="4" /><path d="M380 1185L495 1295M415 1150L400 1210" stroke={LINE} strokeWidth="3" />
        <path d="M540 1315L612 1375L610 1392L535 1335z" fill={BUILD} stroke={LINE} strokeWidth="3" />
        <path d="M1250 1170L1315 1158L1315 1190L1260 1212zM1100 1225L1170 1200L1178 1245L1110 1265zM1010 1260L1090 1235L1098 1270L1030 1295zM945 1270l30 -10 10 40 -30 10zM870 1305L920 1285L930 1330L885 1348zM835 1320l20 -6 8 45 -20 6zM1180 1190l12 -4 18 50 -14 4z" fill={BUILD} stroke={LINE} strokeWidth="3" />
        <path d="M1320 1150L1568 1065V1120L1330 1190z" fill="#22452e" stroke={LINE} strokeWidth="3" /><path d="M1425 1115l60 -22 5 30 -60 20z" fill="#eee" /><path d="M1490 1100l78 -28v45l-70 18z" fill={BUILD} stroke={LINE} strokeWidth="3" />
        <path d="M670 1390Q720 1370 750 1375L745 1400L680 1420z" fill="#e8e8e8" />
        <path d="M365 1450L430 1360L510 1400L545 1468L370 1468zM720 1468l20 -35 50 10zM1370 1340q25 -10 40 25t-20 40q-20 -30 -20 -65z" fill={GREEN} stroke={LINE} strokeWidth="3" />
        <g fill="none" strokeLinejoin="round">
          <path d="M700 1468L740 1430L1340 1215L1568 1150" stroke="#202020" strokeWidth="22" />
          <path d="M16 1285L160 1240L270 1180L325 1178L380 1225" stroke={LINE} strokeWidth="23" /><path d="M16 1285L160 1240L270 1180L325 1178L380 1225" stroke="#f3f0b8" strokeWidth="12" />
          <path d="M340 1195L470 1320L560 1400L640 1455" stroke="#fbd2a1" strokeWidth="30" />
          <path d="M380 1225L520 1340L600 1410L680 1430L850 1375L1100 1290L1280 1225L1360 1180L1568 1130" stroke="#f5f4b4" strokeWidth="16" />
          <path d="M640 1440L690 1468M16 1300L150 1250M20 1440L130 1300L160 1245M170 1250L240 1350L360 1468M160 1250L290 1240L345 1260" stroke="#f0eeee" strokeWidth="11" />
          <path d="M740 1468L1020 1370L1160 1290L1220 1300M1068 1440L1200 1300M1370 1210L1375 1290L1568 1200M1110 1468L1420 1200" stroke="#efedee" strokeWidth="10" />
          <path d="M1060 1468L1390 1180" stroke="#222" strokeWidth="9" />
        </g>
        <path d="M1190 1312h20v16h-20z" fill="#7d80c0" />
        <text x="487" y="1375" transform="rotate(42 487 1375)" fontSize="36" fontFamily="Noto Sans" fill="#6b5238">Dorpsweg</text>
      </g>
    </g>
  </svg>
);

/* ---------- data ---------- */
const sideIcons: Record<string, React.ReactNode> = {
  Information: <g><circle cx="24" cy="24" r="23" fill="#6b9bd2" stroke="#3f6fae" strokeWidth="1.500" /><path d="M5 20C8 8 18 3 27 4C16 8 9 14 5 20Z" fill="#a8c6e8" /><circle cx="27" cy="11.500" r="4" fill="#fff" /><path d="M18 21C22 18 27 18 29 19L24 35C24 38 27 35 29 33C29 38 19 43 17.500 38L21 25C21 22 19 24 17 24Z" fill="#fff" stroke="#3f5f8e" strokeWidth=".6" /></g>,
  Source: <g><Gear cx={29} cy={28} r={19} /><path d="M10 2C15 3 20 8 19 15L47 42C49 47 43 50 39 46L15 20C8 21 3 17 1 11L8 15L14 9Z" fill="#eee" stroke="#333" strokeWidth="1.600" /><path d="M23 21L46 40C50 46 44 50 39 46L18 26Z" fill="#efdd86" stroke="#333" strokeWidth="1.600" /><circle cx="42" cy="43" r="2.500" fill="#222" /></g>,
  Labels: <g><path d="M2 24L10 11H46V37H10Z" fill="#f8ea52" stroke="#c4a000" strokeWidth="2" /><text x="10" y="30" fontSize="18" fontWeight="700" fontFamily={ui} fill="#2e3436" textLength="33">abc</text></g>,
  Masks: <g><path d="M2 30C-1 20 6 14 13 15C16 4 30 6 31 13C42 8 50 18 47 28C47 40 36 40 30 37C24 42 15 40 12 38C4 40 1 36 2 30Z" fill="#e6ecfb" /><text x="4" y="32" fontSize="22" fontWeight="700" fontFamily={ui} fill="#2e3436" textLength="40">abc</text></g>,
  "3D View": <g><path d="M24 1L44 15L25 27L4 14Z" fill="#f68e8e" stroke="#a40000" strokeWidth="2.500" /><path d="M2 17L23 30V48L2 36Z" fill="#8ae234" stroke="#4e9a06" strokeWidth="2" /><path d="M46 17L26 30V48L46 36Z" fill="#fce94f" stroke="#c4a000" strokeWidth="2" /></g>,
  Diagrams: <g><path d="M17 15L5 6A16 16 0 0 1 29 6Z" fill="#fd0" stroke="#f9a51a" strokeWidth="1.500" /><path d="M16 15L4 7A17 17 0 0 0 16 31Z" fill="#00b050" stroke="#0a4d2a" strokeWidth="1.800" /><path d="M17 15L29 7A17 17 0 0 1 17 31Z" fill="#c00000" stroke="#5c0000" strokeWidth="1.800" /><rect x="20" y="32" width="9" height="15" fill="#fd0" stroke="#f9a51a" strokeWidth="2" /><rect x="30" y="19" width="8" height="28" fill="#00b65a" stroke="#0a5a3a" strokeWidth="2" /><rect x="39" y="35" width="8" height="12" fill="#c00000" stroke="#6c0000" strokeWidth="2" /></g>,
  Fields: <g><rect x="2" y="3" width="44" height="43" fill="#e9e9e9" stroke="#6b9bd2" strokeWidth="2.500" /><rect x="3" y="4" width="42" height="11" fill="#bcd8ee" /><path d="M2 15H46" stroke="#6b9bd2" strokeWidth="1.500" /><path d="M8 9H40" stroke="#6b9bd2" strokeWidth="4" /><path d="M8 19H40M8 26H40M8 32H40M8 39H40" stroke="#6b9bd2" strokeWidth="2.500" /><rect x="12" y="2" width="11" height="46" fill="#efe4b8" stroke="#fcf259" strokeWidth="2.500" /><rect x="15" y="7" width="5" height="4" fill="#fff" /></g>,
  "Attributes Form": <g fill="#fff" stroke="#6b9bd2" strokeWidth="2.500"><rect x="2" y="3" width="44" height="42" fill="#e9e9e9" /><rect x="20" y="10" width="19" height="11" rx="1.500" /><rect x="20" y="27" width="19" height="11" rx="1.500" /><path d="M8 15.500H17M8 32.500H17" stroke="#46617f" strokeWidth="5" /></g>,
  Joins: <g><defs><linearGradient id="jg"><stop offset="0" stopColor="#34557f" /><stop offset="1" stopColor="#6b9bd2" /></linearGradient></defs><circle cx="5" cy="24" r="6" fill="#6b9bd2" /><path d="M14 24L48 4V44Z" fill="url(#jg)" /></g>,
  "Auxiliary\nStorage": <g><defs><linearGradient id="ag"><stop offset="0" stopColor="#f2f2f2" /><stop offset="1" stopColor="#6f6f6f" /></linearGradient></defs><path d="M14 1H37L48 12V47H14Z" fill="#fff" stroke="#888" strokeWidth="1.500" /><path d="M37 1V12H48Z" fill="#eee" stroke="#888" strokeWidth="1.500" /><path d="M1 18V43C5 50 26 50 30 43V18Z" fill="url(#ag)" stroke="#444" strokeWidth="1" /><ellipse cx="15.500" cy="18" rx="14.500" ry="5" fill="#e6e6e6" stroke="#555" /><path d="M1 30C5 36 26 36 30 30M1 32C5 38 26 38 30 32" fill="none" stroke="#444" strokeWidth="1.500" /></g>,
  Actions: <g><Gear cx={29} cy={21} r={20} /><path d="M25 15V27L36 21Z" fill="#fff" /><Gear cx={8} cy={41} r={9} /></g>,
  Display: <g><path d="M10 4H38Q46 4 46 12V24Q46 32 38 32H27Q24 40 13 44Q18 38 18 32H10Q2 32 2 24V12Q2 4 10 4Z" fill="#e5db85" stroke="#b39a1e" strokeWidth="1.500" /><path d="M8 18C7 10 11 8 24 9C14 11 11 12 8 18Z" fill="#fff" stroke="#fff" /></g>,
  Rendering: <g><path d="M3 28L15 15L36 24L34 31L21 44Z" fill="#eec07e" stroke="#a8691a" strokeWidth="1.500" /><path d="M9 23L25 39M14 19L29 35M6 26L22 42" stroke="#a8691a" strokeWidth="1.200" /><path d="M15 15C20 12 22 20 26 16L41 3C46 0 48 4 45 8L30 21C28 25 38 28 33 32Z" fill="#dd9a3b" stroke="#9a6212" strokeWidth="1.500" /></g>,
  Temporal: <g><circle cx="24" cy="24" r="22.500" fill="#f0f0ee" stroke="#ddd" /><g fill="#5d8fcb">{[0, 1, 2, 3, 4, 5, 6, 7, 8, 9, 10, 11].map((i) => <circle key={i} cx={24 + 19.500 * Math.sin(i * Math.PI / 6)} cy={24 - 19.500 * Math.cos(i * Math.PI / 6)} r="2" fill={i % 3 ? "#6b9bd2" : "#34557f"} />)}</g><path d="M24 8V25L34 31" fill="none" stroke="#8a8a86" strokeWidth="3.500" /></g>,
  Variables: <g fill="none" strokeLinecap="round"><path d="M34 12C32 2 14 4 14 13C14 20 22 22 28 22M28 22C18 21 10 26 11 33C12 42 34 42 36 33" stroke="#5c3566" strokeWidth="6" /><path d="M14 12L18 8M12 28L16 25M33 34L36 31" stroke="#ad7fa8" strokeWidth="2.500" /></g>,
  Elevation: <g><rect x="31" y="3" width="15" height="29" fill="#f5e21c" stroke="#a89000" strokeWidth="1.800" /><rect x="2" y="30" width="15" height="14" fill="#f5e21c" stroke="#a89000" strokeWidth="1.800" /><path d="M23 1L32 12L26 9V35H20V9L14 12Z" fill="#2e3436" stroke="#d0d3cf" strokeWidth="1.500" /><path d="M13 37H36" stroke="#d0d3cf" strokeWidth="4" /><path d="M12 37H36" stroke="#2e3436" strokeWidth="2" /></g>,
  Metadata: <g><path d="M7 2H31L42 14V45H7Z" fill="#fff" stroke="#999" /><path d="M31 2V14H42Z" fill="#ddd" stroke="#888" /><path d="M12 17H31M12 23H30M12 28H28M12 34H27M12 40H34" stroke="#8a8a86" strokeWidth="2" /><path d="M40 8L47 12L37 30L29 34L31 25Z" fill="#e0652a" stroke="#a43b0a" /><path d="M31 25L37 29L29 34Z" fill="#ccc" stroke="#555" /><path d="M40 8L42 5L49 9L47 12Z" fill="#ddd" /></g>,
  Dependencies: <g><rect x="5" y="4" width="25" height="30" fill="#e8e8e6" stroke="#aaa" /><rect x="18" y="15" width="27" height="25" fill="#eeeeec" stroke="#aaa" /><path d="M22 5H42V17H48L38 29L28 17H34V12H22Z" fill="#8db4e8" stroke="#2f5fa6" strokeWidth="1.500" /><path d="M26 40H7V28H1L11 16L21 28H15V33H26Z" fill="#8db4e8" stroke="#2f5fa6" strokeWidth="1.500" /></g>,
  Legend: <g><rect x="5" y="6" width="9" height="9" fill="#fce94f" stroke="#f5a000" strokeWidth="3" /><path d="M17 13H30" stroke="#999" strokeWidth="5" /></g>,
};
const sections: { title?: string; col: number; rows: [string, React.ReactNode, number?][] }[] = [
  { col: 212, rows: [
    ["Name", "bgt_waterdeel — Waterdeel"],
    ["Path", <PathLink key="p">{"/Users/claragarciasan/Documents/TUD/city4CFD/Delfshaven/polygons/\nextract_delfshaven/bgt_waterdeel.gml"}</PathLink>, 64],
    ["Sidecar file", "bgt_waterdeel.gfs"],
    ["Total size", "4.73 MB"],
    ["Last modified", "12 June 2023 11:29:18 CEST (bgt_waterdeel.gfs)"],
    ["Source", "/Users/claragarciasan/Documents/TUD/city4CFD/Delfshaven/polygons/\nextract_delfshaven/bgt_waterdeel.gml|layername=Waterdeel", 76],
    ["Provider", "ogr"]] },
  { title: "Information from provider", col: 218, rows: [
    ["Storage", "GML"], ["Encoding", "UTF-8"], ["Geometry", "Polygon (CurvePolygon)"],
    ["Extent", "87138.1570000000065193,431788.8068799999891780 :\n95021.4100000000034925,439668.7590099999797530", 76],
    ["Feature count", "1.533"]] },
  { title: "Coordinate Reference System (CRS)", col: 218, rows: [["Unknown", ""]] },
  { title: "Identification", col: 251, rows: [["Identifier", ""], ["Parent Identifier", ""], ["Title", ""], ["Type", "dataset"], ["Language", ""], ["Abstract", ""]] },
];
const dimG = "#4f534f";
const tree: [number, string, React.ReactNode, string?, boolean?][] = [
  [0, "WMS/WMTS", <svg key="a" width="32" height="30" viewBox="0 0 32 32"><circle cx="16" cy="16" r="15" fill="#b4cde9" /><path d="M4 8L12 6L15 11L10 16L6 14ZM18 6L27 9L28 17L22 20L18 14ZM10 19L15 22L12 28Z" fill="#34506f" /><GlobeLines c="#7fa6d3" /></svg>],
  [0, "Vector Tiles", <Tiles key="b" a="#fff" b="#33475e" />],
  [0, "XYZ Tiles", <Tiles key="c" a="#6894c9" b="#1e1e1e" />, "right"],
  [0, "WCS", <svg key="d" width="32" height="30" viewBox="0 0 32 32"><circle cx="16" cy="16" r="15" fill="#6894c9" /><path d="M3 10H29L31 16H1ZM2 21H30L22 30H10Z" fill="#2c4a70" /><path d="M2 10H30M2 21.500H30M1 16H31" stroke="#fff" strokeWidth="1.500" /><ellipse cx="16" cy="16" rx="7" ry="14" fill="#34557f" stroke="#fff" strokeWidth="1.600" /><path d="M9 10H23M9 21.500H23" stroke="#fff" strokeWidth="1.500" /></svg>],
  [0, "WFS / OGC API - Features", <Globe key="e" />, "down"],
  [1, "BAG", <svg key="f" width="32" height="30" viewBox="0 0 32 30"><path d="M5 15H19M26 8C17 8 17 22 26 22" stroke="#8f5902" strokeWidth="4" fill="none" /></svg>, "down"],
  [2, "Ligplaats", <Globe key="g" />],
  [2, "pand", <Globe key="h" />, undefined, true],
  [2, "Standplaats", <Globe key="i" />],
  [2, "Verblijfsobject", <Globe key="j" />],
  [2, "woonplaats", <Globe key="k" />],
  [0, "ArcGIS REST Servers", <svg key="l" width="32" height="30" viewBox="0 0 32 32"><GlobeLines /><circle cx="9" cy="23" r="8.500" fill="#3a3a3a" stroke="#fff" strokeWidth="1.500" /><path d="M5 20L11 19L9 23L13 27L7 26Z" fill="#fff" /></svg>],
  [0, "GeoNode", <svg key="m" width="32" height="32" viewBox="0 0 32 32"><g stroke="#5f8fca" strokeWidth="5" strokeLinecap="round"><path d="M16 3V10M16 22V29M4.700 9.500L10 12.500M22 19.500L27.300 22.500M4.700 22.500L10 19.500M22 12.500L27.300 9.500" /></g><circle cx="16" cy="16" r="3.500" fill="#5f8fca" /></svg>],
];

const Dis = ({ children }: { children: React.ReactNode }) => <g fill="none" stroke={dimG} strokeWidth="5">{children}</g>;
const Node = ({ x, y }: { x: number; y: number }) => <rect x={x - 3} y={y - 3} width="6" height="6" fill="#6a6c6a" stroke="#4c4f4c" strokeWidth="2" />;

export default function App() {
  return (
    <>
      <Global />
      <Desktop>
        <MainWindow>
          <TitleBar><Lights $gap={16} $left={14}><Light $c="#69625d" /><Light $c="#69625d" /><Light $c="#69625d" /></Lights></TitleBar>
          <ToolRow>
            <Slot $w={30}><Grip /></Slot>
            <Slot $w={56}><I><Page /></I></Slot><Space $w={5} />
            <Slot $w={66}><I><path d="M1 7H14L17 12H42V20H46L41 42H1Z" fill="#f5c842" stroke="#b8921a" strokeWidth="1.400" /><path d="M9 17H47L40 42H1Z" fill="#fcd94f" stroke="#b8921a" strokeWidth="1.400" /></I></Slot>
            <Slot $w={66}><I><rect x="4" y="3" width="40" height="42" rx="3" fill="#6894c9" stroke="#4a79b3" /><rect x="10" y="4" width="28" height="18" rx="1" fill="#eeeeec" stroke="#999" /><path d="M13 9H35M13 13H35M13 17.500H35" stroke="#444" strokeWidth="1.800" /><rect x="12" y="30" width="24" height="13" fill="#e2e2e0" stroke="#bbb" /><rect x="15" y="32" width="6" height="9" fill="#34557f" /></I></Slot>
            <Slot $w={66}><I><WideSheet /><path d="M5 6H24V16H15V45H5Z" fill="#fce38a" stroke="#c4a000" strokeWidth="2" /><path d="M10 20H15M10 25H15M10 30H15M10 35H15M10 40H15" stroke="#c4a000" strokeWidth="1.500" /><Star /></I></Slot>
            <Slot $w={66}><I><WideSheet /><Wrench /></I></Slot>
            <Slot $w={66}><I><circle cx="13" cy="13" r="9" fill="#d5622b" /><path d="M28 20L41 7" stroke="#4a7cbf" strokeWidth="5" strokeLinecap="round" /><rect x="4" y="27" width="18" height="17" fill="#85ad8a" stroke="#5b9160" /><text x="26" y="44" fontSize="27" fontWeight="700" fontFamily="Noto Sans" fill="#333" stroke="#e6e6e6" strokeWidth="3" paintOrder="stroke">a</text></I></Slot>
            <Slot $w={44}><Grip /></Slot>
            <Slot $w={44}><PressedButton><I><path d="M16 46C15 38 6 32 5 25C4 20 9 20 11 24L15 29L13 6C13 2 18 2 18 6L21 20L20 3C20-1 25-1 26 3L28 20L29 5C30 1 34 2 34 6L34 22L37 12C38 8 42 9 41 13C40 24 38 36 36 46Z" transform="translate(1 1)" fill="#fff" stroke="#000" strokeWidth="1.500" /><path d="M3 26C4 34 14 40 15 48H36" fill="none" stroke="#bbb" strokeWidth="2" /></I></PressedButton></Slot>
            <Slot $w={84}><I><rect x="4" y="4" width="28" height="26" fill="#4c4634" /><g fill="#4b5157"><path d="M24 1L32 10H27V17H21V10H16ZM24 47L32 38H27V31H21V38H16ZM1 24L10 16V21H17V27H10V32ZM47 24L38 16V21H31V27H38V32Z" /></g></I></Slot>
            <Space $w={1647} />
            <Slot $w={26}><Tri /></Slot>
            <Slot $w={60}><I><path d="M4 9V17M44 9V17M4 13H44" stroke="#40586f" strokeWidth="5" /><rect x="3" y="25" width="43" height="14" fill="#ccc" stroke="#606060" strokeWidth="2" /><path d="M8 26V32M13 26V32M18 26V32M23 26V36M28 26V32M33 26V32M38 26V32" stroke="#333" strokeWidth="2" /></I></Slot>
            <Slot $w={28}><Tri /></Slot>
            <Slot $w={64}><I><circle cx="12" cy="38" r="7" fill="#8cc68c" stroke="#4f5f4f" /><path d="M8 2H40Q46 2 46 8V20Q46 26 40 26H24Q22 35 14 38Q19 32 18 26H8Q2 26 2 20V8Q2 2 8 2Z" fill="#fbeb94" stroke="#c9a800" strokeWidth="2" /></I></Slot>
            <Slot $w={64}><I><Gear cx={24} cy={19} r={18} fill="#6c6c6c" hub="#4f565c" stroke="#444" /><path d="M20 13V25L30 19Z" fill="#777" /><path d="M29 24L47 34L40 35L48 44L45 46L38 37L34 42Z" fill="#808080" stroke="#3a3a3a" /></I></Slot>
            <Slot $w={28}><Tri /></Slot>
          </ToolRow>
          <ToolRow>
            <Slot $w={30}><Grip /></Slot>
            <Slot $w={56}><I><path d="M1 19L30 12L36 38L12 46Z" fill="#d3622e" stroke="#9a4014" /><path d="M7 8L34 4L36 34L8 36Z" fill="#f5cf38" stroke="#b8921a" /><path d="M20 1L46 7L41 35L14 29Z" fill="#6894c9" stroke="#34557f" /><Plus x={29} y={30} /></I></Slot><Space $w={5} />
            <Slot $w={66}><I><circle cx="24" cy="17" r="16.500" fill="#b3cdea" /><path d="M13 8L22 4L24 12L17 18L12 16ZM29 6L38 12L37 22L30 20L27 12ZM17 20L24 24L19 32Z" fill="#34557f" /><path d="M1 17L24 30V48L1 36Z" fill="#d9b310" stroke="#000" strokeWidth="1.200" /><path d="M47 17L24 30V48L47 36Z" fill="#fcf15c" stroke="#000" strokeWidth="1.200" /><Star x={30} y={30} s={18} /></I></Slot>
            <Slot $w={66}><I><path d="M5 5L17 35L31 5" fill="none" stroke="#2b3e52" strokeWidth="2" /><g fill="#fff"><circle cx="5" cy="5" r="2.800" /><circle cx="31" cy="5" r="2.800" /><circle cx="43" cy="5" r="2.800" /><circle cx="17" cy="35" r="2.800" /></g><Star x={30} y={30} s={18} /></I></Slot>
            <Slot $w={66}><I><path d="M44 1C36 5 20 14 14 25L8 36C20 34 36 28 42 14Z" fill="#a9cbea" stroke="#5b88ba" strokeWidth="1.200" /><path d="M44 2L18 28L2 47M12 32H24M16 27H32M21 22H36M27 17H40" fill="none" stroke="#35587f" strokeWidth="1.600" /><Star x={30} y={30} s={18} /></I></Slot>
            <Slot $w={66}><I><path d="M12 5V13M18 5V13M24 5V13M30 5V13M36 5V13M12 33V41M18 33V41M24 33V41" stroke="#34557f" strokeWidth="2" /><rect x="6" y="13" width="36" height="21" rx="2" fill="#6894c9" stroke="#a6c5e6" strokeWidth="2" /><Star x={30} y={30} s={18} /></I></Slot>
            <Slot $w={66}><I><g fill="#78a3d2" stroke="#223f63" strokeWidth="2"><rect x="2" y="3" width="24" height="25" fill="#a9c8e8" /><rect x="26" y="3" width="19" height="25" /><rect x="2" y="29" width="24" height="17" /><path d="M2 3L26 28M26 3L2 28M45 3L26 28M13 29V46M2 37H26" fill="none" /></g><Star x={30} y={30} s={18} /></I></Slot>
            <Slot $w={66}><I><rect x="2" y="3" width="43" height="43" rx="2" fill="#bacce2" stroke="#46617f" strokeWidth="1.500" /><path d="M4 7L16 36L30 5H44" fill="none" stroke="#34506f" strokeWidth="3" /><g fill="#fff" stroke="#34506f"><circle cx="4" cy="5" r="3.500" /><circle cx="30" cy="5" r="4" /><circle cx="43" cy="5" r="3.500" /><circle cx="16" cy="36" r="4.500" /></g><Star x={30} y={30} s={18} /></I></Slot>
            <Slot $w={44}><Grip /></Slot>
            <Slot $w={44}><I><PencilShape t="translate(-4 1)" dim /><PencilShape t="translate(10 0)" /><path d="M38 44H50L44 50Z" fill="#b9b9b9" /></I></Slot>
            <Space $w={1645} />
            <Slot $w={50}><I><rect x="5" y="4" width="42" height="38" fill="#5b7fa8" stroke="#1e2a38" strokeWidth="2" /><text x="28" y="34" fontSize="34" fontFamily="Liberation Serif" fill="#ddd">?</text></I></Slot>
            <Slot $w={70}><Grip /></Slot>
            <Slot $w={26}><I><path d="M23 1V20M23 34V47M-6 30H20M27 30H40" stroke="#5c5c5c" strokeWidth="2" /><circle cx="23" cy="30" r="8.500" fill="none" stroke="#8e1414" strokeWidth="3.500" strokeDasharray="7.500 5.900" strokeDashoffset="-3" /></I></Slot>
          </ToolRow>
          <ToolRow>
            <Slot $w={30}><Grip /></Slot>
            <Slot $w={56}><I><rect x="33" y="2" width="13" height="42" fill="#565652" stroke="#474743" /><path d="M40 8H45M40 14H45M40 20H45M40 26H45" stroke="#333" strokeWidth="2" /><path d="M1 1V47H47ZM9 23V37H24Z" fillRule="evenodd" fill="#5a524c" /></I></Slot><Space $w={5} />
            <Slot $w={62}><I><Dis><path d="M18 5L38 13V37L20 41L6 24Z" /></Dis><Node x={18} y={5} /><Node x={6} y={23} /></I></Slot>
            <Slot $w={30}><Tri /></Slot>
            <Slot $w={64}><I><Blob /><Mini><path d="M3 8H10V3L19 11L10 19V14H3Z" fill="#777" /></Mini></I></Slot>
            <Slot $w={22}><Tri /></Slot>
            <Slot $w={72}><I><Blob /><Mini><path d="M6 15A6 6 0 1 1 12 16" fill="none" stroke="#777" strokeWidth="3.500" /><path d="M14 11V20L8 15Z" fill="#777" /></Mini></I></Slot>
            <Slot $w={62}><I><Blob /><Mini><path d="M1 11L7 5V9H15V5L21 11L15 17V13H7V17Z" fill="#777" /></Mini></I></Slot>
            <Slot $w={68}><I><circle cx="16" cy="15" r="13" fill={dimG} /><path d="M13 31L21 19H37L46 33L38 47H21Z" fill="#585a5c" /><path d="M16 16L31 32M31 26V32H25" stroke="#2b2b2b" strokeWidth="2.500" fill="none" /></I></Slot>
            <Slot $w={64}><I><Blob /><ellipse cx="15" cy="12" rx="9" ry="7" fill="#333" stroke="#5a5d5a" strokeWidth="2" /><Star dim /></I></Slot>
            <Slot $w={68}><I><Blob /><path d="M3 43C4 32 12 27 20 26C22 34 18 42 3 43Z" fill={dimG} /><Star dim /></I></Slot>
          </ToolRow>
          <ToolRow>
            <Slot $w={30}><Grip /></Slot>
            <Slot $w={56}><I><Dis><path d="M7 44C2 22 12 6 40 6M7 44C12 34 20 14 38 8" strokeWidth="3" /></Dis><Node x={11} y={8} /><Node x={40} y={6} /><Node x={20} y={18} /><Node x={7} y={43} /><Star dim /></I></Slot>
            <Slot $w={34}><Tri /></Slot>
            <Slot $w={56}><I><Dis><circle cx="21" cy="21" r="16" /></Dis><Node x={21} y={21} /><Node x={10} y={33} /><Star dim /></I></Slot>
            <Slot $w={34}><Tri /></Slot>
            <Slot $w={56}><I><Dis><ellipse cx="21" cy="22" rx="16" ry="11" transform="rotate(-25 21 22)" /></Dis><Node x={19} y={12} /><Node x={22} y={21} /><Node x={6} y={30} /><Star dim /></I></Slot>
            <Slot $w={34}><Tri /></Slot>
            <Slot $w={56}><I><Dis><rect x="6" y="8" width="33" height="28" /></Dis><Node x={39} y={8} /><Node x={23} y={21} /><Star dim /></I></Slot>
            <Slot $w={34}><Tri /></Slot>
            <Slot $w={56}><I><Dis><path d="M18 5L40 12V37L21 41L6 24Z" /></Dis><Node x={18} y={5} /><Node x={6} y={23} /><Star dim /></I></Slot>
            <Slot $w={34}><Tri /></Slot>
            <Slot $w={34}><Grip /></Slot>
            <Slot $w={52}><I><circle cx="24" cy="24" r="22" fill="#1b1f4e" /><path d="M24 7V20M12 17L24 24L36 17L24 11M12 17L20 12M12 24L24 31L36 24M12 30L24 37L36 30M24 37V44" stroke="#fff" strokeWidth="3" fill="none" /><Plus x={29} y={29} s={19} /></I></Slot>
            <Slot $w={36}><Tri /></Slot>
          </ToolRow>
          <Body>
            <Dock>
              <Panel $h={578}>
                <PanelTitle $h={34}>Browser</PanelTitle>
                <PanelTools $h={64}>
                  <Slot $w={50}><svg width="30" height="32" viewBox="0 0 30 32"><rect x="1" y="3" width="23" height="22" fill="#eee" stroke="#888" strokeWidth="2" /><Plus x={17} y={20} s={12} /></svg></Slot>
                  <Slot $w={50}><svg width="30" height="32" viewBox="0 0 30 32"><path d="M2 13C3 2 18 -1 24 6L29 2V15H16L20 10C15 6 9 7 2 13Z" fill="#5f90cc" stroke="#34557f" strokeWidth=".8" /><path d="M28 19C27 30 12 33 6 26L1 30V17H14L10 22C15 26 21 25 28 19Z" fill="#5f90cc" stroke="#34557f" strokeWidth=".8" /></svg></Slot>
                  <Slot $w={50}><Funnel /></Slot><Slot $w={50}><TreeArrow up /></Slot>
                  <Slot $w={50}><I s={27}>{sideIcons.Information}</I></Slot>
                </PanelTools>
                <Tree>
                  {tree.map(([lv, name, icon, tw, on]) => (
                    <TreeRow key={name} $level={lv} $on={on}><Twisty $w={32}>{tw && <Tri d={tw} />}</Twisty><Space $w={6} /><TreeIcon>{icon}</TreeIcon><span>{name}</span></TreeRow>
                  ))}
                </Tree>
              </Panel>
              <SplitGrip>{[0, 1, 2, 3, 4, 5].map((i) => <GripDot key={i} />)}</SplitGrip>
              <Panel $h={541}>
                <PanelTitle $h={42}>Layers</PanelTitle>
                <PanelTools $h={58}>
                  <Slot $w={52}><Paint s={30} /></Slot>
                  <Slot $w={48}><svg width="28" height="30" viewBox="0 0 28 30"><path d="M1 17V28H13" stroke="#999" strokeWidth="2" fill="none" /><rect x="9" y="3" width="17" height="17" fill="#eee" stroke="#888" /><rect x="5" y="7" width="17" height="17" fill="#eee" stroke="#888" /><path d="M13 18V3Q16 -1 19 3V17Q16 20 14 17" fill="none" stroke="#34557f" strokeWidth="1.600" /><Plus x={17} y={18} s={12} /></svg></Slot>
                  <Slot $w={54}><svg width="34" height="30" viewBox="0 0 34 30"><path d="M1 16Q15 3 30 16Q16 29 1 16Z" fill="#f2f2f2" stroke="#555" /><path d="M1 7Q14 0 29 9" stroke="#888" strokeWidth="2" fill="none" /><circle cx="15" cy="15" r="8" fill="#6894c9" /><circle cx="15" cy="14" r="3.500" fill="#000" /><path d="M23 26H34L28.500 31Z" fill="#b9b9b9" /></svg></Slot>
                  <Slot $w={46}><Funnel menu /></Slot>
                  <Slot $w={54}><svg width="28" height="30" viewBox="0 0 28 30"><path d="M12 5C11 0 2 1 2 5Q2 9 8 9Q0 9 1 14C2 19 12 18 13 14" fill="none" stroke="#5c3566" strokeWidth="3" /><rect x="13" y="16" width="15" height="14" rx="2" fill="#777" /><path d="M16 18H26L22 24V29H20V24Z" fill="#fff" /></svg></Slot>
                  <Slot $w={18}><Tri /></Slot>
                  <Slot $w={58}><TreeArrow /></Slot><Slot $w={42}><TreeArrow up /></Slot>
                  <Slot $w={58}><svg width="28" height="30" viewBox="0 0 28 30"><rect x="1" y="2" width="23" height="23" fill="#eee" stroke="#888" strokeWidth="2" /><rect x="16" y="19" width="12" height="10" rx="2" fill="#e54848" /><path d="M18 24H26" stroke="#fff" strokeWidth="2.500" /></svg></Slot>
                </PanelTools>
                <Tree>
                  <LayerRow><Space $w={46} /><Check><Tick /></Check><Swatch $c="#17121c"><I s={30}><PencilShape t="translate(4 0)" /></I></Swatch><span>sample_area</span></LayerRow>
                  <LayerRow $on><Space $w={46} /><Check><Tick /></Check><Swatch $c={WATER} /><span>bgt_waterdeel — Waterdeel</span></LayerRow>
                  <LayerRow><Space $w={46} /><Check><Tick /></Check><Swatch $c="#15752e" /><span>bgt_begroeidterreindeel — Begroeidterreindeel</span></LayerRow>
                  <LayerRow $off><Space $w={46} /><Check /><Swatch $c="transparent"><svg width="32" height="2"><rect width="30" height="2" fill="#6a3f28" /></svg></Swatch><span>bgt_begroeidterreindeel — Begroeidterreindeel</span></LayerRow>
                  <LayerRow><Space $w={46} /><Check><Tick /></Check><Swatch $c={BUILD} /><span>pand</span></LayerRow>
                  <LayerRow><Space $w={12} /><Twisty $w={16}><Tri /></Twisty><Space $w={18} /><Check><Tick /></Check><Swatch $c="transparent"><svg width="27" height="27" viewBox="0 0 27 27"><rect width="27" height="27" fill="#a9c4e3" /><path d="M0 0h9v9h-9zM18 0h9v9h-9zM9 9h9v9h-9zM0 18h9v9h-9zM18 18h9v9h-9z" fill="#2d3c52" /></svg></Swatch><span>OpenStreetMap</span></LayerRow>
                </Tree>
              </Panel>
            </Dock>
            <MapPane><MapView /></MapPane>
          </Body>
          <StatusBar>
            <Locator><Lens />Type to locate (⌘K)</Locator>
            <Space $w={724} />
            <StatusText $w={122}>Coordinate</StatusText>
            <Field $w={193} $pad={15}>87720 435253</Field>
            <Space $w={10} />
            <svg width="30" height="34" viewBox="0 0 30 34"><path d="M4 3L7 1L15 14L11 1L15 2L18 13Q28 20 28 27Q25 36 16 32Q9 28 10 18Z" fill="#999" stroke="#1a1a1a" strokeWidth="2" /><circle cx="19" cy="25" r="4" fill="#bbb" stroke="#222" strokeWidth="2" /><path d="M22 4L26 8M27 2V5M1 20L4 22" stroke="#111" strokeWidth="2" /></svg>
            <Space $w={27} />
            <StatusText $w={65}>Scale</StatusText>
            <Field $w={183} $pad={5}>1:32684<FieldButton $w={39}><Tri c="#111" s={15} /></FieldButton></Field>
            <Space $w={26} />
            <svg width="24" height="30" viewBox="0 0 24 30"><path d="M5 14V8Q5 2 12 2Q19 2 19 8V14" stroke="#999" strokeWidth="3.500" fill="none" /><rect y="13" width="24" height="17" rx="2" fill="#777" /></svg>
            <Space $w={19} />
            <StatusText $w={105}>Magnifier</StatusText>
            <Field $w={185} $pad={7}>100%<FieldButton $w={28}><Tri d="up" /><Tri /></FieldButton></Field>
            <Space $w={19} />
            <StatusText $w={106}>Rotation</StatusText>
            <Field $w={185} $pad={8}>0,0 °<FieldButton $w={28}><Tri d="up" /><Tri /></FieldButton></Field>
            <Space $w={13} /><Check $m={9}><Tick c="#eee" /></Check>
            <StatusText $w={107}>Render</StatusText>
            <svg width="30" height="30" viewBox="0 0 32 32"><circle cx="16" cy="16" r="15" fill="#aaa" /><g stroke="#444" fill="none" strokeWidth="1.400"><path d="M2 10H30M1 16H31M2 22H30M16 1V31" /><ellipse cx="16" cy="16" rx="8" ry="15" /></g></svg>
            <Space $w={6} />
            <StatusText $w={181} $c="#0b0b0b">EPSG:28992</StatusText>
            <svg width="32" height="32" viewBox="0 0 32 32"><path d="M16 1Q31 1 31 13Q31 22 26 25L30 31L18 26Q1 26 1 13Q1 1 16 1Z" fill="#8a8a8a" /><g fill="#fff"><circle cx="9" cy="13" r="2.200" /><circle cx="16" cy="13" r="2.200" /><circle cx="23" cy="13" r="2.200" /></g></svg>
          </StatusBar>
        </MainWindow>

        <DialogShadow />
        <Dialog>
          <TitleBar>
            <Lights $gap={16} $left={13}><Light $c="#ee6a5e" /><Light $c="#69625d" /><Light $c="#61c554" /></Lights>
            <Title>Layer Properties — bgt_waterdeel — Waterdeel — Information</Title>
          </TitleBar>
          <DialogBody>
            <Sidebar>
              <Search><Lens /></Search>
              <SideMain>
                <SideList>
                  {["Information", "Source", "Symbology", "Labels", "Masks", "3D View", "Diagrams", "Fields", "Attributes Form", "Joins", "Auxiliary\nStorage", "Actions", "Display", "Rendering", "Temporal", "Variables", "Elevation", "Metadata", "Dependencies", "Legend"].map((n, i) => (
                    <SideItem key={n} $on={i === 0} $h={n.includes("\n") ? 76 : 72}>
                      {n === "Symbology" ? <Paint s={50} /> : <I s={50}>{sideIcons[n]}</I>}
                      <span>{n}</span>
                    </SideItem>
                  ))}
                </SideList>
                <VScroll>
                  <ScrollButton><Tri d="up" s={16} /></ScrollButton>
                  <Thumb $h={1158} $mt={2} />
                  <Space $w={1} $grow />
                  <ScrollButton><Tri s={16} /></ScrollButton>
                </VScroll>
              </SideMain>
            </Sidebar>
            <SplitGrip $v>{[0, 1, 2, 3, 4, 5].map((i) => <GripDot key={i} />)}</SplitGrip>
            <Content>
              <DocFrame>
                <Paper>
                  {sections.map((s, i) => (
                    <React.Fragment key={i}>
                      {s.title && <Heading>{s.title}</Heading>}
                      <Rule />
                      {s.rows.map(([k, v, h]) => <Row key={k} $col={s.col} $h={h}><b>{k}</b><span>{v}</span></Row>)}
                    </React.Fragment>
                  ))}
                </Paper>
                <VScroll>
                  <ScrollButton><Tri d="up" s={16} /></ScrollButton>
                  <Thumb $h={438} $mt={19} />
                  <Space $w={1} $grow />
                  <ScrollButton><Tri s={16} /></ScrollButton>
                </VScroll>
              </DocFrame>
              <HScroll>
                <ScrollButton><Tri d="left" s={16} /></ScrollButton>
                <Space $w={2} /><Thumb $w={1246} /><Space $w={3} />
                <ScrollButton><Tri d="right" s={16} /></ScrollButton>
              </HScroll>
              <Buttons>
                <Button>Help</Button>
                <Button><Space $w={27} />Style<Space $w={41} /><Tri s={12} /></Button>
                <Button>Apply</Button>
                <Button $left>Cancel</Button>
                <Button $primary>OK</Button>
              </Buttons>
            </Content>
          </DialogBody>
        </Dialog>
      </Desktop>
    </>
  );
}
